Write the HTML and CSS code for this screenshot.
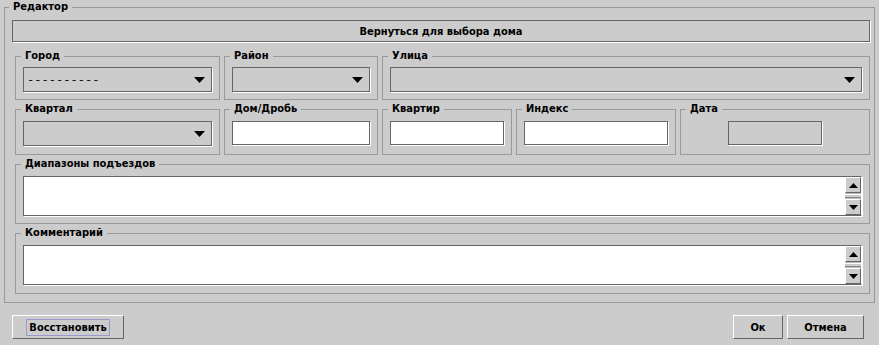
FILE: index.html
```html
<!DOCTYPE html>
<html lang="ru">
<head>
    <meta charset="UTF-8">
    <title>Редактор</title>
    <link rel="stylesheet" href="styles.css">
</head>
<body>
    <fieldset class="editor">
        <legend>Редактор</legend>
        <button class="back-btn">Вернуться для выбора дома</button>

        <div class="row row-top">
            <fieldset class="group">
                <legend>Город</legend>
                <div class="combo">
                    <span class="combo-value">----------</span>
                    <svg width="11" height="6" viewBox="0 0 11 6"><polygon points="0,0 11,0 5.5,6" fill="#000"/></svg>
                </div>
            </fieldset>
            <fieldset class="group">
                <legend>Район</legend>
                <div class="combo">
                    <span></span>
                    <svg width="11" height="6" viewBox="0 0 11 6"><polygon points="0,0 11,0 5.5,6" fill="#000"/></svg>
                </div>
            </fieldset>
            <fieldset class="group">
                <legend>Улица</legend>
                <div class="combo">
                    <span></span>
                    <svg width="11" height="6" viewBox="0 0 11 6"><polygon points="0,0 11,0 5.5,6" fill="#000"/></svg>
                </div>
            </fieldset>
        </div>

        <div class="row row-second">
            <fieldset class="group">
                <legend>Квартал</legend>
                <div class="combo">
                    <span></span>
                    <svg width="11" height="6" viewBox="0 0 11 6"><polygon points="0,0 11,0 5.5,6" fill="#000"/></svg>
                </div>
            </fieldset>
            <fieldset class="group">
                <legend>Дом/Дробь</legend>
                <div class="field"></div>
            </fieldset>
            <fieldset class="group">
                <legend>Квартир</legend>
                <div class="field"></div>
            </fieldset>
            <fieldset class="group">
                <legend>Индекс</legend>
                <div class="field"></div>
            </fieldset>
            <fieldset class="group">
                <legend>Дата</legend>
                <div class="field field-date"></div>
            </fieldset>
        </div>

        <fieldset class="group wide">
            <legend>Диапазоны подъездов</legend>
            <div class="area">
                <div class="area-text"></div>
                <div class="scroll">
                    <div class="scroll-btn">
                        <svg width="9" height="5" viewBox="0 0 9 5"><polygon points="4.5,0 9,5 0,5" fill="#000"/></svg>
                    </div>
                    <div class="scroll-track"><div class="scroll-thumb"></div></div>
                    <div class="scroll-btn">
                        <svg width="9" height="5" viewBox="0 0 9 5"><polygon points="0,0 9,0 4.5,5" fill="#000"/></svg>
                    </div>
                </div>
            </div>
        </fieldset>

        <fieldset class="group wide">
            <legend>Комментарий</legend>
            <div class="area">
                <div class="area-text"></div>
                <div class="scroll">
                    <div class="scroll-btn">
                        <svg width="9" height="5" viewBox="0 0 9 5"><polygon points="4.5,0 9,5 0,5" fill="#000"/></svg>
                    </div>
                    <div class="scroll-track"><div class="scroll-thumb"></div></div>
                    <div class="scroll-btn">
                        <svg width="9" height="5" viewBox="0 0 9 5"><polygon points="0,0 9,0 4.5,5" fill="#000"/></svg>
                    </div>
                </div>
            </div>
        </fieldset>
    </fieldset>

    <div class="actions">
        <button class="btn btn-restore"><span class="focus">Восстановить</span></button>
        <div class="actions-right">
            <button class="btn btn-ok">Ок</button>
            <button class="btn btn-cancel">Отмена</button>
        </div>
    </div>
</body>
</html>
```

FILE: styles.css
```css
* {
    box-sizing: border-box;
}

body {
    margin: 0;
    padding: 0;
    background: #cccccc;
    font-family: 'DejaVu Sans Condensed', 'DejaVu Sans', sans-serif;
    font-size: 11px;
    font-weight: bold;
    color: #000;
}

fieldset {
    margin: 0;
    min-width: 0;
    border: 1px solid #999999;
}

legend {
    padding: 0 4px;
    line-height: 14px;
    height: 14px;
}

.editor {
    margin: 0 4px;
    padding: 6px 4px 8px 7px;
}

.editor > legend {
    margin-left: -3px;
}

.back-btn {
    display: block;
    width: 100%;
    height: 22px;
    margin: 0;
    padding: 0;
    background: #cccccc;
    border: 1px solid #666666;
    box-shadow: 1px 1px 0 #ffffff;
    font: inherit;
    color: #000;
}

.row {
    display: grid;
    gap: 4px;
    margin-left: 3px;
}

.row-top {
    grid-template-columns: 205px 154px 1fr;
    margin-top: 7px;
}

.row-second {
    grid-template-columns: 205px 154px 130px 160px 1fr;
    margin-top: 2px;
}

.group {
    padding: 4px 7px 7px 7px;
}

.group > legend {
    margin-left: -2px;
}

.row-second .group {
    padding: 5px 7px 8px 7px;
}

.wide {
    margin: 2px 0 0 3px;
    padding: 5px 7px 7px 7px;
}

.wide + .wide {
    padding-bottom: 8px;
}

.combo {
    height: 25px;
    display: flex;
    align-items: center;
    justify-content: space-between;
    padding: 0 6px 0 3px;
    border: 1px solid #666666;
    box-shadow: 1px 1px 0 #ffffff;
}

.combo-value {
    font-family: 'Liberation Mono', monospace;
    font-size: 11.5px;
    font-weight: normal;
    transform: scaleX(1.05);
    transform-origin: left center;
}

.combo svg {
    flex: none;
}

.field {
    height: 24px;
    background: #ffffff;
    border: 1px solid #666666;
    box-shadow: 1px 1px 0 #ffffff;
}

.field-date {
    width: 94px;
    margin: 0 auto;
    background: #cccccc;
}

.area {
    display: flex;
    height: 40px;
    background: #ffffff;
    border: 1px solid #666666;
    border-right: 1px solid #ffffff;
    box-shadow: 1px 1px 0 #ffffff;
}

.area-text {
    flex: 1;
}

.scroll {
    width: 16px;
    display: flex;
    flex-direction: column;
    background: #bbbbbb;
}

.scroll-btn {
    height: 16px;
    display: flex;
    align-items: center;
    justify-content: center;
    background: #cccccc;
    border: 1px solid #ffffff;
    border-right-color: #666666;
    border-bottom-color: #666666;
}

.scroll-track {
    flex: 1;
    padding: 1px 0;
}

.scroll-thumb {
    height: 100%;
    background: #cccccc;
    border-top: 1px solid #ffffff;
    border-bottom: 1px solid #888888;
}

.actions {
    display: flex;
    justify-content: space-between;
    margin-top: 12px;
    padding: 0 15px 0 12px;
}

.actions-right {
    display: flex;
    gap: 4px;
}

.btn {
    height: 24px;
    margin: 0;
    padding: 0;
    background: #cccccc;
    border: 1px solid #ffffff;
    border-right-color: #666666;
    border-bottom-color: #666666;
    font: inherit;
    color: #000;
}

.btn-restore {
    width: 112px;
}

.focus {
    display: inline-block;
    padding: 1px 2px;
    border: 1px solid #9999cc;
    line-height: 13px;
}

.btn-ok {
    width: 50px;
}

.btn-cancel {
    width: 77px;
}
```
